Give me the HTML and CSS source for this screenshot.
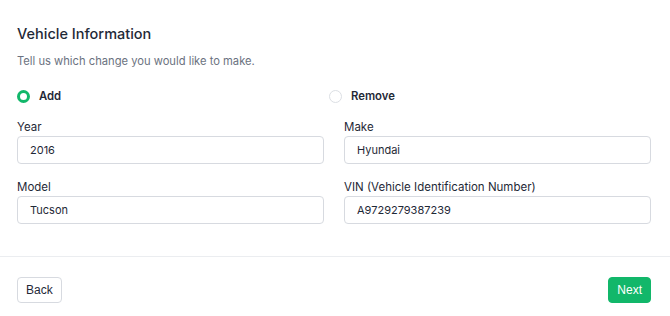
FILE: index.html
```html
<!DOCTYPE html>
<html>
<head>
<meta charset="utf-8">
<link rel="stylesheet" href="styles.css">
</head>
<body>
<div class="card">
  <div class="content">
    <h2 class="title">Vehicle Information</h2>
    <p class="subtitle">Tell us which change you would like to make.</p>
    <div class="radios">
      <label class="radio"><span class="dot checked"></span><span class="radio-text">Add</span></label>
      <label class="radio"><span class="dot"></span><span class="radio-text">Remove</span></label>
    </div>
    <div class="grid fields">
      <div class="field"><div class="label">Year</div><div class="input">2016</div></div>
      <div class="field"><div class="label">Make</div><div class="input">Hyundai</div></div>
      <div class="field"><div class="label">Model</div><div class="input">Tucson</div></div>
      <div class="field"><div class="label">VIN (Vehicle Identification Number)</div><div class="input">A9729279387239</div></div>
    </div>
  </div>
  <div class="footer">
    <button class="btn back">Back</button>
    <button class="btn next">Next</button>
  </div>
</div>
</body>
</html>
```

FILE: styles.css
```css
* { box-sizing: border-box; }
body {
  margin: 0;
  background: #fff;
  font-family: Inter, "Noto Sans", sans-serif;
  color: #1f2937;
}
.content {
  padding: 22px 19px 32px 17px;
  border-bottom: 1px solid #ebedf0;
}
.title {
  margin: 0;
  font-size: 14.5px;
  line-height: 24px;
  font-weight: 500;
  color: #1f2937;
}
.subtitle {
  margin: 5px 0 0;
  font-size: 11.2px;
  line-height: 20px;
  color: #6b7280;
}
.radios {
  display: grid;
  grid-template-columns: 312px 1fr;
  margin-top: 15px;
}
.grid {
  display: grid;
  grid-template-columns: 1fr 1fr;
  column-gap: 20px;
  margin-top: 13px;
}
.fields { row-gap: 15px; }
.radio {
  display: flex;
  align-items: center;
  height: 20px;
}
.dot {
  width: 13px;
  height: 13px;
  border-radius: 50%;
  border: 1px solid #dcdfe4;
  background: #fff;
  margin-right: 9px;
}
.dot.checked {
  border: 3.5px solid #12b76a;
  background: #fff;
}
.radio-text {
  font-size: 11.3px;
  font-weight: 600;
  color: #1f2937;
}
.label {
  font-size: 11.5px;
  line-height: 16px;
  font-weight: 400;
  color: #1f2937;
  margin-bottom: 1px;
}
.input {
  height: 28px;
  border: 1px solid #d7dae0;
  border-radius: 4px;
  padding: 0 12px;
  display: flex;
  align-items: center;
  font-size: 11px;
  color: #1f2937;
}
.footer {
  display: flex;
  justify-content: space-between;
  padding: 20px 19px 0 17px;
}
.btn {
  height: 26px;
  border-radius: 4px;
  font-family: "Liberation Sans", Arial, sans-serif;
  font-size: 12px;
  padding: 0 8px;
  cursor: pointer;
}
.back {
  background: #fff;
  border: 1px solid #d7dae0;
  color: #1f2937;
}
.next {
  background: #12b76a;
  border: 1px solid #12b76a;
  color: #fff;
}
```
